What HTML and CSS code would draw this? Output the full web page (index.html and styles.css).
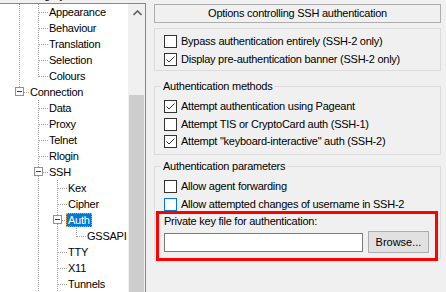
FILE: index.html
```html
<!DOCTYPE html>
<html lang="en">
<head>
  <meta charset="UTF-8" />
  <title>PuTTY Configuration - Auth</title>
  <link rel="stylesheet" href="styles.css">
</head>
<body>

  <div class="dialog">

    <!-- CATEGORY TREE -->
    <div class="left">
      <div class="caption"><span>Category:</span></div>
      <div class="treebox">
        <div class="tree">
          <div class="row"><span class="cell pipe"></span><span class="cell tee"></span><span class="label">Appearance</span></div>
          <div class="row"><span class="cell pipe"></span><span class="cell tee"></span><span class="label">Behaviour</span></div>
          <div class="row"><span class="cell pipe"></span><span class="cell tee"></span><span class="label">Translation</span></div>
          <div class="row"><span class="cell pipe"></span><span class="cell tee"></span><span class="label">Selection</span></div>
          <div class="row"><span class="cell pipe"></span><span class="cell elbow"></span><span class="label">Colours</span></div>
          <div class="row"><span class="cell elbow"><i class="expander"></i></span><span class="label">Connection</span></div>
          <div class="row"><span class="cell"></span><span class="cell tee"></span><span class="label">Data</span></div>
          <div class="row"><span class="cell"></span><span class="cell tee"></span><span class="label">Proxy</span></div>
          <div class="row"><span class="cell"></span><span class="cell tee"></span><span class="label">Telnet</span></div>
          <div class="row"><span class="cell"></span><span class="cell tee"></span><span class="label">Rlogin</span></div>
          <div class="row"><span class="cell"></span><span class="cell tee"><i class="expander"></i></span><span class="label">SSH</span></div>
          <div class="row"><span class="cell"></span><span class="cell pipe"></span><span class="cell tee"></span><span class="label">Kex</span></div>
          <div class="row"><span class="cell"></span><span class="cell pipe"></span><span class="cell tee"></span><span class="label">Cipher</span></div>
          <div class="row"><span class="cell"></span><span class="cell pipe"></span><span class="cell tee"><i class="expander"></i></span><span class="label selected">Auth</span></div>
          <div class="row"><span class="cell"></span><span class="cell pipe"></span><span class="cell pipe"></span><span class="cell elbow"></span><span class="label">GSSAPI</span></div>
          <div class="row"><span class="cell"></span><span class="cell pipe"></span><span class="cell tee"></span><span class="label">TTY</span></div>
          <div class="row"><span class="cell"></span><span class="cell pipe"></span><span class="cell tee"></span><span class="label">X11</span></div>
          <div class="row"><span class="cell"></span><span class="cell pipe"></span><span class="cell tee"></span><span class="label">Tunnels</span></div>
        </div>
        <div class="scrollbar">
          <div class="arrow">
            <svg width="9" height="6" viewBox="0 0 9 6"><polyline points="0.5,5 4.5,1 8.5,5" fill="none" stroke="#606060" stroke-width="1.6"/></svg>
          </div>
          <div class="thumb"></div>
        </div>
      </div>
    </div>

    <!-- OPTIONS PANEL -->
    <div class="right">
      <div class="header">Options controlling SSH authentication</div>

      <div class="group first">
        <div class="check-row"><span class="box"></span>Bypass authentication entirely (SSH-2 only)</div>
        <div class="check-row"><span class="box"><svg width="11" height="11" viewBox="0 0 11 11"><polyline points="1.5,5.5 4,8 9.5,2.5" fill="none" stroke="#333" stroke-width="1"/></svg></span>Display pre-authentication banner (SSH-2 only)</div>
      </div>

      <div class="group">
        <div class="legend">Authentication methods</div>
        <div class="check-row"><span class="box"><svg width="11" height="11" viewBox="0 0 11 11"><polyline points="1.5,5.5 4,8 9.5,2.5" fill="none" stroke="#333" stroke-width="1"/></svg></span>Attempt authentication using Pageant</div>
        <div class="check-row"><span class="box"></span>Attempt TIS or CryptoCard auth (SSH-1)</div>
        <div class="check-row"><span class="box"><svg width="11" height="11" viewBox="0 0 11 11"><polyline points="1.5,5.5 4,8 9.5,2.5" fill="none" stroke="#333" stroke-width="1"/></svg></span>Attempt "keyboard-interactive" auth (SSH-2)</div>
      </div>

      <div class="group last">
        <div class="legend">Authentication parameters</div>
        <div class="check-row"><span class="box"></span>Allow agent forwarding</div>
        <div class="check-row"><span class="box hover"></span>Allow attempted changes of username in SSH-2</div>
        <div class="keyfile">
          <div class="keylabel">Private key file for authentication:</div>
          <div class="keyrow">
            <input type="text" class="edit" />
            <button class="btn">Browse...</button>
          </div>
        </div>
      </div>
    </div>

  </div>

</body>
</html>
```

FILE: styles.css
```css
body {
  margin: 0;
  background: #f0f0f0;
  font-family: "Liberation Sans", Arial, sans-serif;
  font-size: 11px;
  letter-spacing: -0.25px;
  color: #000;
  overflow: hidden;
}
.dialog {
  display: flex;
  height: 292px;
}

/* tree */
.left {
  width: 146px;
  flex: none;
  display: flex;
  flex-direction: column;
}
.caption {
  height: 5px;
  overflow: hidden;
}
.caption span {
  display: block;
  margin-top: -11px;
  padding-left: 22px;
  line-height: 13px;
}
.treebox {
  flex: 1;
  display: flex;
  background: #fff;
  border: 1px solid #828790;
  border-left: none;
  border-bottom: none;
}
.tree {
  flex: 1;
  padding-left: 10px;
  overflow: hidden;
}
.row {
  display: flex;
  align-items: center;
  height: 16px;
  white-space: nowrap;
}
.cell {
  width: 19px;
  height: 16px;
  flex: none;
  display: flex;
  align-items: center;
  justify-content: center;
  background-repeat: no-repeat;
}
.pipe {
  background-image: repeating-linear-gradient(to bottom, #a0a0a0 0 1px, transparent 1px 2px);
  background-position: 9px 0;
  background-size: 1px 16px;
}
.tee {
  background-image:
    repeating-linear-gradient(to bottom, #a0a0a0 0 1px, transparent 1px 2px),
    repeating-linear-gradient(to right, #a0a0a0 0 1px, transparent 1px 2px);
  background-position: 9px 0, 10px 8px;
  background-size: 1px 16px, 9px 1px;
}
.elbow {
  background-image:
    repeating-linear-gradient(to bottom, #a0a0a0 0 1px, transparent 1px 2px),
    repeating-linear-gradient(to right, #a0a0a0 0 1px, transparent 1px 2px);
  background-position: 9px 0, 10px 8px;
  background-size: 1px 9px, 9px 1px;
}
.expander {
  width: 7px;
  height: 7px;
  border: 1px solid #919191;
  background: #fff linear-gradient(#263f78, #263f78) center / 5px 1px no-repeat;
  margin-top: -1px;
}
.label {
  margin-left: -1px;
  padding: 0 2px;
  line-height: 14px;
}
.label.selected {
  background: #0078d7;
  color: #fff;
  outline: 1px dotted #f0a040;
  outline-offset: -1px;
}
.scrollbar {
  width: 17px;
  flex: none;
  background: #f0f0f0;
  display: flex;
  flex-direction: column;
  align-items: center;
}
.arrow {
  height: 17px;
  display: flex;
  align-items: center;
  justify-content: center;
  margin-left: 1px;
}
.thumb {
  margin-top: 74px;
  width: 15px;
  flex: 1;
  background: #cdcdcd;
}

/* options panel */
.right {
  width: 287px;
  padding: 4px 0 0 8px;
}
.header {
  height: 17px;
  line-height: 17px;
  text-align: center;
  border: 1px solid #adadad;
}
.group {
  border: 1px solid #dcdcdc;
  padding: 0 0 3px 9px;
  margin-top: 15px;
}
.group.first {
  margin-top: 5px;
  padding-top: 4px;
  padding-bottom: 2px;
}
.group.last {
  margin-top: 11px;
  padding: 0;
}
.legend {
  width: fit-content;
  margin: -7px 0 5px -3px;
  padding: 0 2px;
  line-height: 13px;
  background: #f0f0f0;
}
.group.last .legend {
  margin-left: 6px;
  margin-bottom: 5.5px;
}
.group.last .check-row {
  padding-left: 9px;
}
.check-row {
  display: flex;
  align-items: flex-start;
  height: 17.5px;
  line-height: 17px;
  white-space: nowrap;
}
.box {
  width: 11px;
  height: 11px;
  flex: none;
  margin: 2px 4px 0 0;
  border: 1px solid #333;
  background: #fff;
  display: flex;
}
.box.hover {
  border-color: #0078d7;
}
.keyfile {
  margin: -2px 2px -3px 1px;
  border: 3px solid #ff0000;
  padding: 1px 6px 5px 5px;
}
.keylabel {
  line-height: 13px;
}
.keyrow {
  display: flex;
  align-items: center;
  gap: 5px;
  margin-top: 3px;
}
.edit {
  width: 199px;
  height: 19px;
  box-sizing: border-box;
  border: 1px solid #7a7a7a;
  background: #fff;
  margin: 0;
  padding: 0 3px;
  font: inherit;
}
.btn {
  width: 61px;
  height: 22px;
  box-sizing: border-box;
  border: 1px solid #adadad;
  background: #e1e1e1;
  margin: 0;
  padding: 0;
  font: inherit;
  color: #000;
}
```
